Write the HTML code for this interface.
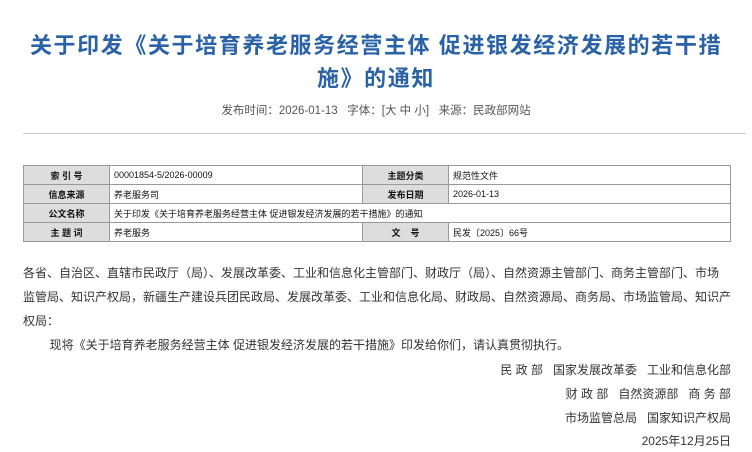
<!DOCTYPE html>
<html><head><meta charset="utf-8"><style>
body{margin:0;background:#fff;font-family:"Liberation Sans","Noto Sans CJK SC",sans-serif;color:#333;width:752px;height:452px;overflow:hidden;position:relative}
.t{position:absolute;left:0;width:752px;text-align:center;color:#2a62a6;font-weight:bold;font-size:22px;line-height:33px;top:29px;letter-spacing:1.6px}
.m{position:absolute;top:102px;left:0;width:752px;text-align:center;font-size:11.5px;color:#555}
.hr{position:absolute;top:133px;left:23px;width:723px;height:1px;background:#ccc}
table{position:absolute;top:165px;left:23px;width:708px;border-collapse:collapse;font-size:9px;color:#111}
td{border:1px solid #999;height:18px;padding:0 4px}
td.h{background:#ddd;font-weight:bold;text-align:center}
.b{position:absolute;top:261px;left:23px;width:712px;font-size:12px;line-height:24px;color:#333}
.r{position:absolute;left:0;width:731px;text-align:right;font-size:12px;color:#333}
</style></head><body>
<div class="t">关于印发《关于培育养老服务经营主体 促进银发经济发展的若干措<br>施》的通知</div>
<div class="m">发布时间：2026-01-13&nbsp;&nbsp;&nbsp;字体：[大 中 小]&nbsp;&nbsp;&nbsp;来源：民政部网站</div>
<div class="hr"></div>
<table>
<tr><td class="h" style="width:77px">索 引 号</td><td style="width:244px">00001854-5/2026-00009</td><td class="h" style="width:77px">主题分类</td><td>规范性文件</td></tr>
<tr><td class="h">信息来源</td><td>养老服务司</td><td class="h">发布日期</td><td>2026-01-13</td></tr>
<tr><td class="h">公文名称</td><td colspan="3">关于印发《关于培育养老服务经营主体 促进银发经济发展的若干措施》的通知</td></tr>
<tr><td class="h">主 题 词</td><td>养老服务</td><td class="h">文&nbsp;&nbsp;&nbsp;&nbsp;号</td><td>民发〔2025〕66号</td></tr>
</table>
<div class="b">各省、自治区、直辖市民政厅（局）、发展改革委、工业和信息化主管部门、财政厅（局）、自然资源主管部门、商务主管部门、市场<br>监管局、知识产权局，新疆生产建设兵团民政局、发展改革委、工业和信息化局、财政局、自然资源局、商务局、市场监管局、知识产<br>权局：<br>&nbsp;&nbsp;&nbsp;&nbsp;&nbsp;&nbsp;&nbsp;&nbsp;现将《关于培育养老服务经营主体 促进银发经济发展的若干措施》印发给你们，请认真贯彻执行。</div>
<div class="r" style="top:361px">民 政 部&nbsp;&nbsp;&nbsp;国家发展改革委&nbsp;&nbsp;&nbsp;工业和信息化部</div>
<div class="r" style="top:385px">财 政 部&nbsp;&nbsp;&nbsp;自然资源部&nbsp;&nbsp;&nbsp;商 务 部</div>
<div class="r" style="top:409px">市场监管总局&nbsp;&nbsp;&nbsp;国家知识产权局</div>
<div class="r" style="top:432px">2025年12月25日</div>
</body></html>
